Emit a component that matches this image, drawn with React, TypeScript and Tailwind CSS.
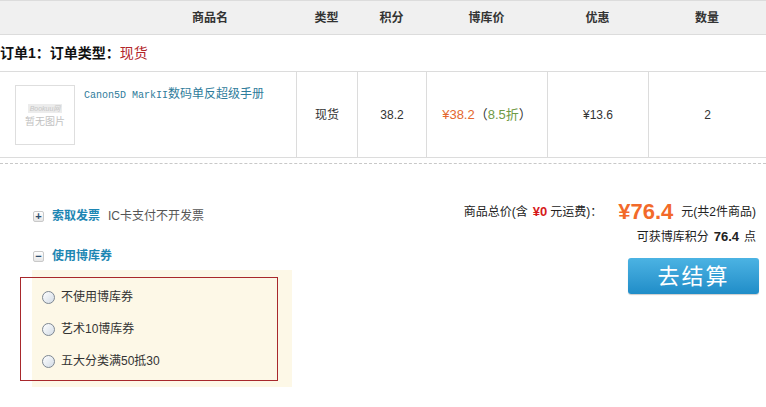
import React from "react";

const cols = "grid grid-cols-[296px_61px_69px_121px_101px_118px]";

function ToggleIcon({ open }: { open?: boolean }) {
    return <span className="w-[11px] h-[11px] rounded-[2px] border border-[#c9c9c9] bg-gradient-to-b from-white to-[#e6e6e6] flex items-center justify-center text-[#2d4e6e] text-[11px] font-bold leading-none">
        {open ? "−" : "+"}
    </span>
}

function Radio({ label }: { label: string }) {
    return <div className="h-[32px] flex items-center gap-[6px]">
        <span className="w-[13px] h-[13px] rounded-full border border-[#7d8792] bg-gradient-to-br from-white to-[#d3dce6]" />
        <span className="text-[12px] text-[#333]">{label}</span>
    </div>
}

export default function App() {
    return <div className="w-[766px] h-[407px] overflow-hidden bg-white text-[#333]" style={{ fontFamily: '"Liberation Sans", "Noto Sans CJK SC", sans-serif' }}>
        {/* table header */}
        <div className={`${cols} h-[35px] items-center border-t border-b border-[#dcdcdc] bg-[#f0f0f0] text-[12px] font-bold text-[#333]`}>
            <div className="pl-[124px] text-center">商品名</div>
            <div className="text-center">类型</div>
            <div className="text-center">积分</div>
            <div className="text-center">博库价</div>
            <div className="text-center">优惠</div>
            <div className="text-center">数量</div>
        </div>

        <div className="h-[36px] flex items-center text-[14px] font-bold text-[#111]">
            订单1：订单类型：<span className="font-normal text-[#b3262a]">现货</span>
        </div>

        {/* product row */}
        <div className={`${cols} h-[87px] border-t border-b border-[#dcdcdc] text-[12px]`}>
            <div className="flex pt-[13px] pl-[15px] gap-[9px]">
                <div className="w-[60px] h-[60px] border border-[#dedede] flex flex-col items-center justify-center gap-[4px]">
                    <span className="bg-[#ececec] px-[2px] text-[7px] italic text-[#c6c6c6] leading-[9px]">Bookuu网</span>
                    <span className="text-[10px] text-[#c2c2c2] leading-none">暂无图片</span>
                </div>
                <div className="pt-[1px] text-[#2f7c9b] leading-[16px]">
                    <span className="text-[10px]" style={{ fontFamily: '"Liberation Mono", monospace' }}>Canon5D MarkII</span>数码单反超级手册
                </div>
            </div>
            <div className="border-l border-[#dcdcdc] flex items-center justify-center">现货</div>
            <div className="border-l border-[#dcdcdc] flex items-center justify-center">38.2</div>
            <div className="border-l border-[#dcdcdc] flex items-center justify-center text-[13px]">
                <span className="text-[#e4672e]">¥38.2</span>
                <span>（</span>
                <span className="text-[#6f9a45]">8.5折</span>
                <span>）</span>
            </div>
            <div className="border-l border-[#dcdcdc] flex items-center justify-center">¥13.6</div>
            <div className="border-l border-[#dcdcdc] flex items-center justify-center">2</div>
        </div>

        <div className="mt-[5px] border-t border-dashed border-[#c8c8c8]" />

        {/* bottom */}
        <div className="flex justify-between">
            <div className="pt-[45px]">
                <div className="ml-[33px] h-[14px] flex items-center gap-[8px] text-[12px]">
                    <ToggleIcon />
                    <span className="font-bold text-[#1d86b3]">索取发票</span>
                    <span className="text-[#555]">IC卡支付不开发票</span>
                </div>
                <div className="ml-[33px] mt-[26px] h-[14px] flex items-center gap-[8px] text-[12px]">
                    <ToggleIcon open />
                    <span className="font-bold text-[#1d86b3]">使用博库券</span>
                </div>
                <div className="ml-[32px] mt-[7px] w-[260px] h-[117px] bg-[#fdf8e7] pt-[7px]">
                    <div className="-ml-[12px] w-[258px] h-[104px] border border-[#a8282c] pl-[21px] pt-[3px]">
                        <Radio label="不使用博库券" />
                        <Radio label="艺术10博库券" />
                        <Radio label="五大分类满50抵30" />
                    </div>
                </div>
            </div>

            <div className="pt-[36px] pr-[7px] flex flex-col items-end">
                <div className="h-[24px] pr-[3px] flex items-center text-[12px] text-[#222]">
                    <span>商品总价(含</span>
                    <span className="ml-[5px] text-[13px] font-bold text-[#d61a1a]">¥0</span>
                    <span className="ml-[3px]">元运费)：</span>
                    <span className="ml-[16px] text-[22px] font-bold text-[#f26a2a] leading-none">¥76.4</span>
                    <span className="ml-[8px]">元(共2件商品)</span>
                </div>
                <div className="mt-[1px] h-[24px] pr-[3px] flex items-center text-[12px] text-[#222]">
                    <span>可获博库积分</span>
                    <span className="mx-[5px] text-[13px] font-bold">76.4</span>
                    <span>点</span>
                </div>
                <div className="mt-[9px] w-[131px] h-[36px] rounded-[3px] bg-gradient-to-b from-[#4bb3e3] to-[#1f8dc8] flex items-center justify-center text-white text-[22px] tracking-[2px] shadow-[0_1px_1px_rgba(0,0,0,0.2)]">
                    去结算
                </div>
            </div>
        </div>
    </div>
}
